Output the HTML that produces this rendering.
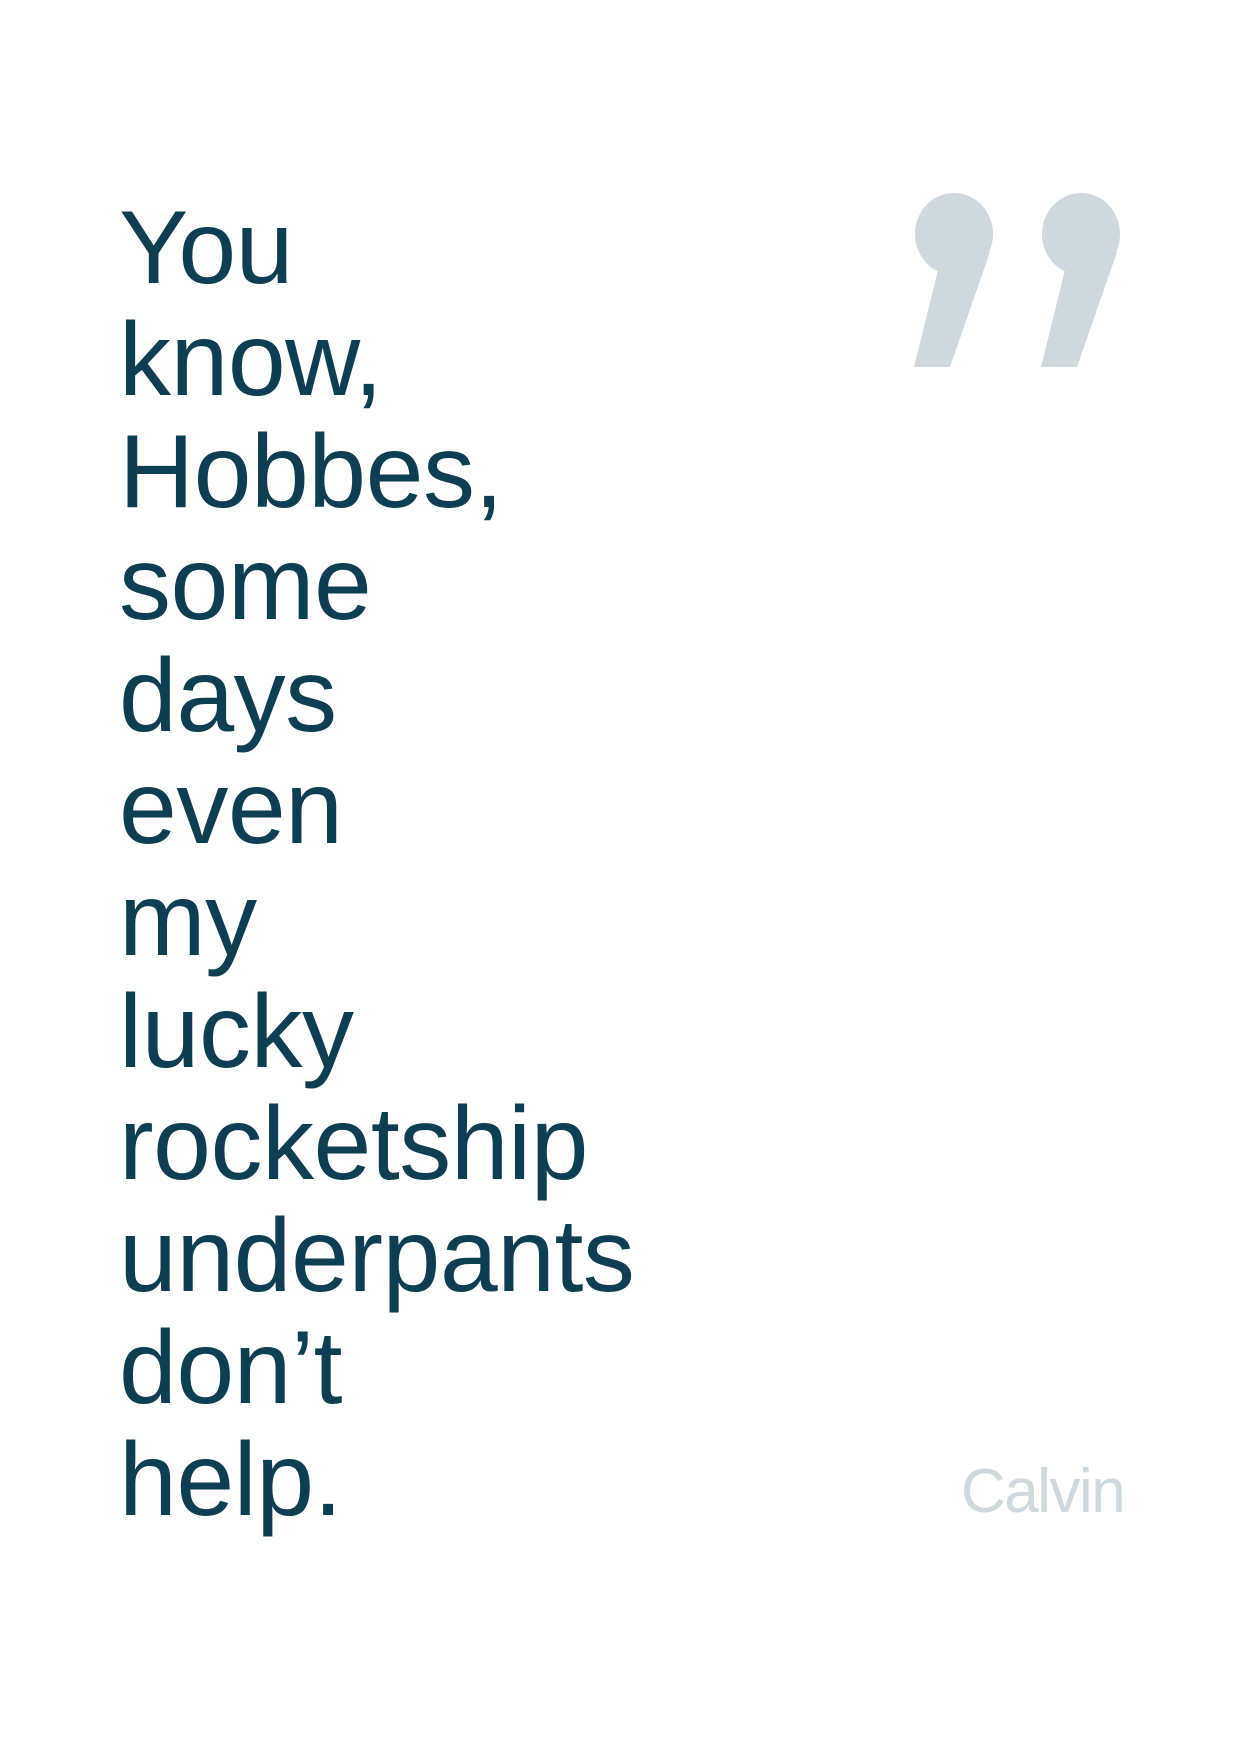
<!DOCTYPE html>
<html><head><style>
html,body{margin:0;padding:0;background:#fff;}
body{width:1240px;height:1753px;position:relative;overflow:hidden;}
.q{position:absolute;left:119px;top:192px;font-family:"Liberation Sans",sans-serif;font-size:104px;line-height:112px;color:#0e3e51;letter-spacing:-0.5px;}
.a{position:absolute;left:961px;top:1452px;font-family:"Liberation Sans",sans-serif;font-size:62px;line-height:80px;color:#cfd8dc;letter-spacing:-1.5px;}
svg{position:absolute;left:0;top:0;}
</style></head><body>
<svg width="1240" height="500">
<g fill="#cfd8dc">
<ellipse cx="954" cy="234" rx="39" ry="41"/>
<polygon points="940,262 914,367 950,367 990,252 958,250"/>
<ellipse cx="1081" cy="234" rx="39" ry="41"/>
<polygon points="1067,262 1041,367 1077,367 1117,252 1085,250"/>
</g>
</svg>
<div class="q">You<br>know,<br>Hobbes,<br>some<br>days<br>even<br>my<br>lucky<br>rocketship<br>underpants<br>don’t<br>help.</div>
<div class="a">Calvin</div>
</body></html>
